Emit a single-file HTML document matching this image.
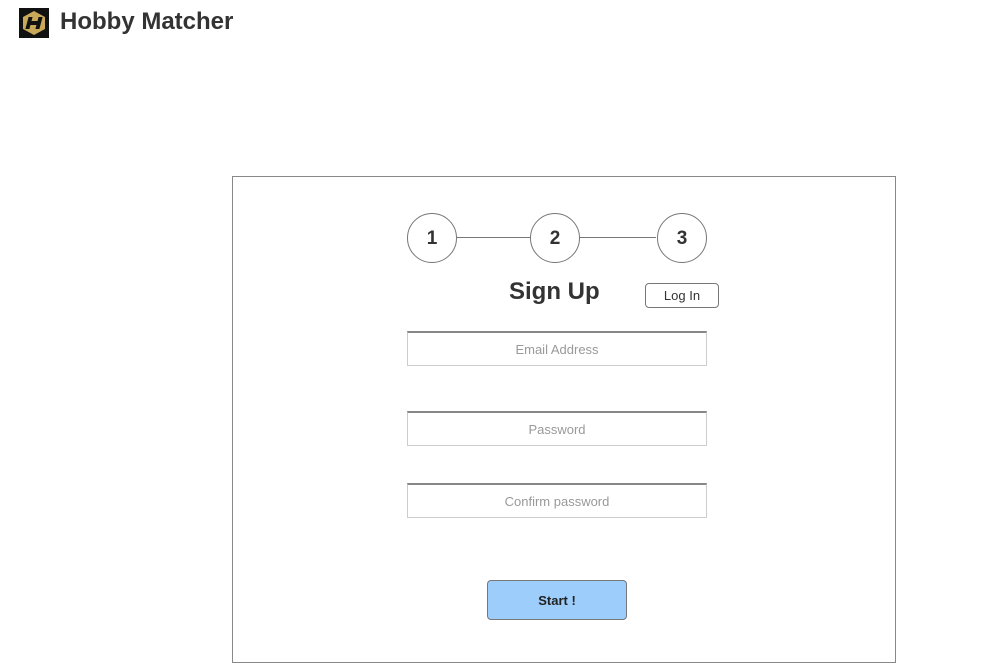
<!DOCTYPE html>
<html><head><style>
body{margin:0;width:1000px;height:662px;background:#fff;position:relative;overflow:hidden;font-family:"Liberation Sans",Arial,sans-serif;color:#333}
.a{position:absolute}
.c{position:absolute;width:48px;height:48px;border:1px solid #777;border-radius:50%;background:#fff;text-align:center;line-height:50px;font-size:19px;font-weight:bold;color:#333}
.in{position:absolute;left:407px;width:298px;height:32px;border:1px solid #ccc;border-top:2px solid #888;text-align:center;line-height:33px;font-size:13px;color:#999}
</style></head><body>
<svg class="a" style="left:19px;top:8px" width="30" height="30" viewBox="0 0 30 30">
<rect width="30" height="30" fill="#111"/>
<polygon points="15,3 26,9 26,21 15,27 4,21 4,9" fill="#c9a85a"/>
<polygon points="8,9 12,9 12,13 18,13 18,9 22,9 22,21 18,21 18,17 12,17 12,21 8,21" fill="#111" transform="skewX(-15) translate(4,0)"/>
</svg>
<div class="a" style="left:60px;top:8px;font-size:24px;font-weight:bold;color:#333">Hobby Matcher</div>
<div class="a" style="left:232px;top:176px;width:662px;height:485px;border:1px solid #888"></div>
<div class="a" style="left:456px;top:237px;width:200px;height:1px;background:#777"></div>
<div class="c" style="left:407px;top:213px">1</div>
<div class="c" style="left:530px;top:213px">2</div>
<div class="c" style="left:657px;top:213px">3</div>
<div class="a" style="left:509px;top:278px;font-size:24px;font-weight:bold;color:#333">Sign Up</div>
<div class="a" style="left:645px;top:283px;width:72px;height:23px;border:1px solid #777;border-radius:4px;text-align:center;line-height:24px;font-size:13px;color:#333">Log In</div>
<div class="in" style="top:331px">Email Address</div>
<div class="in" style="top:411px">Password</div>
<div class="in" style="top:483px">Confirm password</div>
<div class="a" style="left:487px;top:580px;width:138px;height:38px;border:1px solid #777;border-radius:4px;background:#9dcdfb;text-align:center;line-height:39px;font-size:13px;font-weight:bold;color:#222">Start !</div>
</body></html>
